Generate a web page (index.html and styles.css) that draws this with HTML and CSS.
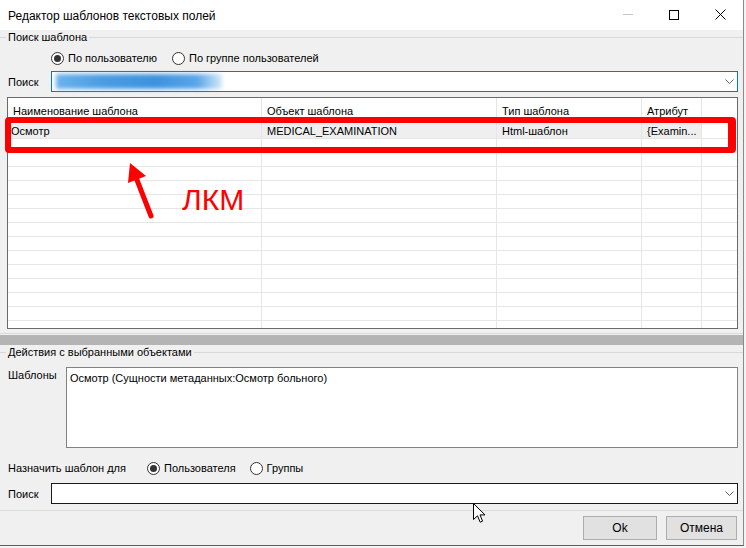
FILE: index.html
```html
<!DOCTYPE html>
<html lang="ru">
<head>
<meta charset="utf-8">
<title>Редактор шаблонов текстовых полей</title>
<link rel="stylesheet" href="styles.css">
</head>
<body>
<div class="window">
  <div class="titlebar">
    <span class="title">Редактор шаблонов текстовых полей</span>
    <div class="controls">
      <span class="ctl"><svg width="10" height="1" viewBox="0 0 10 1"><rect width="10" height="1" fill="#c8c8c8"/></svg></span>
      <span class="ctl"><svg width="10" height="10" viewBox="0 0 10 10"><rect x="0.5" y="0.5" width="9" height="9" fill="none" stroke="#000"/></svg></span>
      <span class="ctl"><svg width="11" height="11" viewBox="0 0 11 11"><path d="M0.5 0.5L10.5 10.5M10.5 0.5L0.5 10.5" stroke="#000" stroke-width="1"/></svg></span>
    </div>
  </div>
  <div class="content">
    <div class="group-head"><span class="gh-left"></span><span class="gh-text">Поиск шаблона</span><span class="gh-line"></span></div>
    <div class="radio-row first">
      <span class="radio"><span class="rb on"></span>По пользователю</span>
      <span class="radio"><span class="rb"></span>По группе пользователей</span>
    </div>
    <div class="field-row">
      <span class="field-label">Поиск</span>
      <div class="combo focus">
        <span class="blur"></span>
        <svg class="chev" width="9" height="5" viewBox="0 0 9 5"><path d="M0.5 0.5L4.5 4.5L8.5 0.5" fill="none" stroke="#606060"/></svg>
      </div>
    </div>
    <div class="grid">
      <div class="row head">
        <div class="cell">Наименование шаблона</div>
        <div class="cell">Объект шаблона</div>
        <div class="cell">Тип шаблона</div>
        <div class="cell">Атрибут</div>
        <div class="cell"></div>
      </div>
      <div class="row sel">
        <div class="cell c1">Осмотр</div>
        <div class="cell">MEDICAL_EXAMINATION</div>
        <div class="cell">Html-шаблон</div>
        <div class="cell">{Examin...</div>
        <div class="cell"></div>
      </div>
      <div class="row"><div class="cell"></div><div class="cell"></div><div class="cell"></div><div class="cell"></div><div class="cell"></div></div>
      <div class="row"><div class="cell"></div><div class="cell"></div><div class="cell"></div><div class="cell"></div><div class="cell"></div></div>
      <div class="row"><div class="cell"></div><div class="cell"></div><div class="cell"></div><div class="cell"></div><div class="cell"></div></div>
      <div class="row"><div class="cell"></div><div class="cell"></div><div class="cell"></div><div class="cell"></div><div class="cell"></div></div>
      <div class="row"><div class="cell"></div><div class="cell"></div><div class="cell"></div><div class="cell"></div><div class="cell"></div></div>
      <div class="row"><div class="cell"></div><div class="cell"></div><div class="cell"></div><div class="cell"></div><div class="cell"></div></div>
      <div class="row"><div class="cell"></div><div class="cell"></div><div class="cell"></div><div class="cell"></div><div class="cell"></div></div>
      <div class="row"><div class="cell"></div><div class="cell"></div><div class="cell"></div><div class="cell"></div><div class="cell"></div></div>
      <div class="row"><div class="cell"></div><div class="cell"></div><div class="cell"></div><div class="cell"></div><div class="cell"></div></div>
      <div class="row"><div class="cell"></div><div class="cell"></div><div class="cell"></div><div class="cell"></div><div class="cell"></div></div>
      <div class="row"><div class="cell"></div><div class="cell"></div><div class="cell"></div><div class="cell"></div><div class="cell"></div></div>
      <div class="row"><div class="cell"></div><div class="cell"></div><div class="cell"></div><div class="cell"></div><div class="cell"></div></div>
      <div class="row"><div class="cell"></div><div class="cell"></div><div class="cell"></div><div class="cell"></div><div class="cell"></div></div>
      <div class="row"><div class="cell"></div><div class="cell"></div><div class="cell"></div><div class="cell"></div><div class="cell"></div></div>
    </div>
    <div class="splitter"></div>
    <div class="group-head"><span class="gh-left"></span><span class="gh-text">Действия с выбранными объектами</span><span class="gh-line"></span></div>
    <div class="tpl-row">
      <span class="tpl-label">Шаблоны</span>
      <div class="textbox">Осмотр (Сущности метаданных:Осмотр больного)</div>
    </div>
    <div class="radio-row assign">
      <span class="assign-label">Назначить шаблон для</span>
      <span class="radio"><span class="rb on"></span>Пользователя</span>
      <span class="radio"><span class="rb"></span>Группы</span>
    </div>
    <div class="field-row second">
      <span class="field-label">Поиск</span>
      <div class="combo plain">
        <svg class="chev" width="9" height="5" viewBox="0 0 9 5"><path d="M0.5 0.5L4.5 4.5L8.5 0.5" fill="none" stroke="#606060"/></svg>
      </div>
    </div>
    <div class="separator"></div>
    <div class="buttons">
      <span class="btn ok">Ok</span>
      <span class="btn cancel">Отмена</span>
    </div>
  </div>
</div>
<div class="annot-rect"></div>
<svg class="annot-arrow" width="50" height="70" viewBox="115 155 50 70">
  <line x1="151" y1="216" x2="137" y2="180" stroke="#ff0000" stroke-width="5" stroke-linecap="round"/>
  <polygon points="130,163 146,176 128,183" fill="#ff0000"/>
</svg>
<span class="annot-text">ЛКМ</span>
<svg class="cursor" width="13" height="20" viewBox="0 0 13 20">
  <path d="M0.5 0.5L0.5 16.5L4.5 12.8L7.2 19.2L9.6 18.2L7 11.9L12 11.9Z" fill="#fff" stroke="#000" stroke-width="1" stroke-linejoin="miter"/>
</svg>
</body>
</html>
```

FILE: styles.css
```css
html, body {
  margin: 0;
  padding: 0;
}
body {
  position: relative;
  width: 746px;
  height: 548px;
  overflow: hidden;
  background: #f3f3f3;
  font-family: "Liberation Sans", Arial, sans-serif;
  font-size: 11px;
  color: #000;
}
.window {
  width: 744px;
  height: 546px;
  box-sizing: border-box;
  border-right: 1px solid #8a8a8a;
  border-bottom: 1px solid #5f5f5f;
  background: #f0f0f0;
  display: flex;
  flex-direction: column;
  overflow: hidden;
}
.titlebar {
  height: 30px;
  flex-shrink: 0;
  background: #fff;
  display: flex;
  align-items: center;
}
.title {
  flex: 1;
  padding-left: 8px;
  font-size: 12px;
  padding-top: 1px;
}
.controls {
  display: flex;
  height: 30px;
}
.ctl {
  width: 46px;
  display: flex;
  align-items: center;
  justify-content: center;
  padding-bottom: 1px;
  box-sizing: border-box;
}
.content {
  display: flex;
  flex-direction: column;
  flex: 1;
}
.group-head {
  display: flex;
  align-items: center;
  height: 14px;
  flex-shrink: 0;
}
.gh-left {
  width: 6px;
  height: 1px;
  background: #d8d8d8;
}
.gh-text {
  padding: 0 2px;
  line-height: 14px;
}
.gh-line {
  flex: 1;
  height: 1px;
  background: #d8d8d8;
}
.radio-row {
  display: flex;
  align-items: center;
  height: 16px;
}
.radio-row.first {
  margin-top: 6px;
  padding-left: 51px;
}
.radio {
  display: inline-flex;
  align-items: center;
  gap: 4px;
  margin-right: 15px;
}
.rb {
  width: 13px;
  height: 13px;
  box-sizing: border-box;
  border: 1px solid #333;
  border-radius: 50%;
  background: #fff;
  display: flex;
  align-items: center;
  justify-content: center;
}
.rb.on::after {
  content: "";
  width: 7px;
  height: 7px;
  border-radius: 50%;
  background: #333;
}
.field-row {
  display: flex;
  align-items: center;
  height: 21px;
  margin-top: 5px;
}
.field-label {
  width: 51px;
  padding-left: 8px;
  box-sizing: border-box;
}
.combo {
  width: 687px;
  height: 21px;
  box-sizing: border-box;
  background: #fff;
  display: flex;
  align-items: center;
  padding: 0 3px 0 4px;
}
.combo.focus {
  border: 1px solid #0078d7;
}
.combo.plain {
  border: 1px solid #1a1a1a;
}
.blur {
  width: 166px;
  height: 15px;
  background: linear-gradient(90deg, #6cb2ec 0%, #4a9be2 30%, #3d92dd 60%, #5aa6e8 85%, rgba(150, 200, 245, 0.4) 100%);
  filter: blur(2px);
}
.chev {
  margin-left: auto;
}
.grid {
  margin: 5px 0 0 7px;
  width: 731px;
  height: 232px;
  flex-shrink: 0;
  box-sizing: border-box;
  border: 1px solid #6a6a6a;
  background: #fff;
  overflow: hidden;
}
.row {
  display: grid;
  grid-template-columns: 254px 235px 145px 60px 35px;
  height: 14px;
}
.cell {
  box-sizing: border-box;
  border-right: 1px solid #e6e6e6;
  border-bottom: 1px solid #e6e6e6;
  padding-left: 5px;
  white-space: nowrap;
  overflow: hidden;
  line-height: 13px;
}
.row .cell:last-child {
  border-right: none;
}
.row.head {
  height: 26px;
}
.row.head .cell {
  border-bottom: none;
  line-height: 26px;
  padding-top: 0;
}
.row.sel {
  height: 15px;
}
.row.sel .cell {
  line-height: 14px;
}
.row.sel .cell:not(:last-child) {
  background: #efefef;
}
.row.sel .c1 {
  padding-left: 3px;
}
.splitter {
  margin-top: 4px;
  height: 12px;
  flex-shrink: 0;
  box-sizing: border-box;
  border-top: 1px solid #dadada;
  padding-top: 1px;
  background: #b4b4b4;
  background-clip: content-box;
}
.tpl-row {
  display: flex;
  margin-top: 8px;
}
.tpl-label {
  width: 66px;
  padding: 1px 0 0 8px;
  box-sizing: border-box;
  line-height: 14px;
}
.textbox {
  width: 672px;
  height: 81px;
  box-sizing: border-box;
  border: 1px solid #828282;
  background: #fff;
  padding: 3px 3px;
  line-height: 14px;
}
.radio-row.assign {
  margin-top: 12px;
}
.assign-label {
  width: 147px;
  padding-left: 8px;
  box-sizing: border-box;
}
.radio-row.assign .radio {
  margin-right: 14px;
}
.field-row.second {
  margin-top: 7px;
}
.separator {
  margin-top: 6px;
  height: 1px;
  background: #dadada;
}
.buttons {
  margin-top: 5px;
  display: flex;
  justify-content: flex-end;
  gap: 9px;
  padding-right: 6px;
}
.btn {
  height: 24px;
  box-sizing: border-box;
  background: #e1e1e1;
  border: 1px solid #adadad;
  display: flex;
  align-items: center;
  justify-content: center;
  font-size: 12px;
}
.btn.ok {
  width: 74px;
}
.btn.cancel {
  width: 71px;
}
.annot-rect {
  position: absolute;
  left: 5px;
  top: 117px;
  width: 731px;
  height: 36px;
  box-sizing: border-box;
  border: 6px solid #ff0000;
  border-right-width: 8px;
  border-radius: 4px;
}
.annot-arrow {
  position: absolute;
  left: 115px;
  top: 155px;
}
.annot-text {
  position: absolute;
  left: 182px;
  top: 182px;
  font-size: 30px;
  line-height: 36px;
  color: #ff0000;
}
.cursor {
  position: absolute;
  left: 473px;
  top: 503px;
}
```
